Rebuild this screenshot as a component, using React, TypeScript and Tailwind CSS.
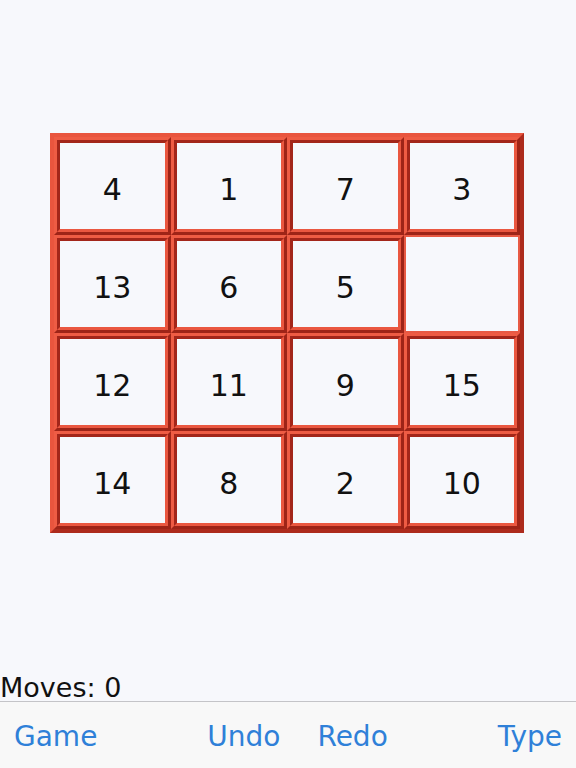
import React from "react";

const board: (number | null)[] = [4, 1, 7, 3, 13, 6, 5, null, 12, 11, 9, 15, 14, 8, 2, 10];

function Tile({ value }: { value: number | null }) {
  if (value === null) {
    return <div className="border-2 border-[#e85a44] bg-[#f7f8fc]" />;
  }
  return (
    <div className="border-[3px] border-t-[#ee5c44] border-l-[#ee5c44] border-b-[#9e2417] border-r-[#9e2417]">
      <div className="h-full w-full border-[3px] border-t-[#a3261a] border-l-[#a3261a] border-b-[#ea5740] border-r-[#ea5740] bg-[#f7f8fc] flex items-center justify-center pt-[7px]">
        <span className="text-[30px] leading-none text-[#111]">{value}</span>
      </div>
    </div>
  );
}

export default function App() {
  return (
    <div
      className="h-[768px] w-[576px] flex flex-col bg-[#f7f8fc] overflow-hidden"
      style={{ fontFamily: '"DejaVu Sans", "Liberation Sans", sans-serif' }}
    >
      <div className="flex-1">
        <div className="ml-[50px] mt-[133px] w-[474px] h-[400px] border-4 border-t-[#e9553e] border-l-[#e9553e] border-b-[#ad2b1d] border-r-[#ad2b1d] grid grid-cols-4 grid-rows-4">
          {board.map((v, i) => (
            <Tile key={i} value={v} />
          ))}
        </div>
      </div>
      <div className="text-[27px] leading-[26px] text-[#111]">Moves: 0</div>
      <div className="h-[67px] border-t border-[#c4c4c8] bg-[#f8f8f8] flex items-center justify-between px-[14px] pt-[3px] text-[28px] text-[#2f80d8]">
        <span>Game</span>
        <div className="flex gap-[37px]">
          <span>Undo</span>
          <span>Redo</span>
        </div>
        <span>Type</span>
      </div>
    </div>
  );
}
